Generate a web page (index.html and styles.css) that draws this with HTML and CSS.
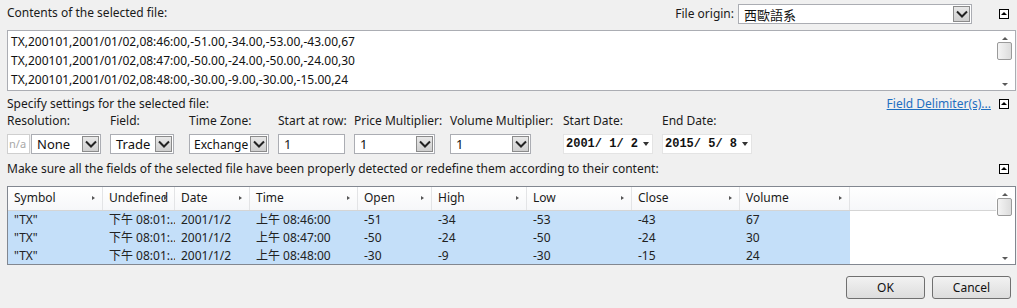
FILE: index.html
```html
<!DOCTYPE html>
<html lang="en">
  <head>
    <title>Import File</title>
    <meta charset="UTF-8" />
    <link rel="stylesheet" href="styles.css">
  </head>
  <body>
    <div class="dialog">
      <!-- file contents -->
      <div class="top-row">
        <span class="caption">Contents of the selected file:</span>
        <div class="origin">
          <span class="caption">File origin:</span>
          <div class="select origin-select">
            <span class="select-text">西歐語系</span>
            <span class="drop"><svg width="12" height="8" viewBox="0 0 12 8"><path d="M1 1.5 L6 6.5 L11 1.5" fill="none" stroke="#222" stroke-width="2"/></svg></span>
          </div>
          <span class="collapse"></span>
        </div>
      </div>

      <div class="contents">
        <div class="contents-lines">
          <div>TX,200101,2001/01/02,08:46:00,-51.00,-34.00,-53.00,-43.00,67</div>
          <div>TX,200101,2001/01/02,08:47:00,-50.00,-24.00,-50.00,-24.00,30</div>
          <div>TX,200101,2001/01/02,08:48:00,-30.00,-9.00,-30.00,-15.00,24</div>
        </div>
        <div class="vscroll">
          <span class="arrow up"></span>
          <span class="thumb"></span>
          <span class="arrow down"></span>
        </div>
      </div>

      <!-- settings -->
      <div class="section-row">
        <span class="caption">Specify settings for the selected file:</span>
        <div class="section-right">
          <a class="link" href="#">Field Delimiter(s)...</a>
          <span class="collapse"></span>
        </div>
      </div>

      <div class="settings">
        <div class="field w-res">
          <span class="caption">Resolution:</span>
          <div class="pair">
            <div class="na">n/a</div>
            <div class="select w-none">
              <span class="select-text">None</span>
              <span class="drop"><svg width="12" height="8" viewBox="0 0 12 8"><path d="M1 1.5 L6 6.5 L11 1.5" fill="none" stroke="#222" stroke-width="2"/></svg></span>
            </div>
          </div>
        </div>
        <div class="field w-field">
          <span class="caption">Field:</span>
          <div class="select w-trade">
            <span class="select-text">Trade</span>
            <span class="drop"><svg width="12" height="8" viewBox="0 0 12 8"><path d="M1 1.5 L6 6.5 L11 1.5" fill="none" stroke="#222" stroke-width="2"/></svg></span>
          </div>
        </div>
        <div class="field w-tz">
          <span class="caption">Time Zone:</span>
          <div class="select w-exch">
            <span class="select-text narrow">Exchange</span>
            <span class="drop"><svg width="12" height="8" viewBox="0 0 12 8"><path d="M1 1.5 L6 6.5 L11 1.5" fill="none" stroke="#222" stroke-width="2"/></svg></span>
          </div>
        </div>
        <div class="field w-row">
          <span class="caption">Start at row:</span>
          <div class="input w-rowbox">1</div>
        </div>
        <div class="field w-price">
          <span class="caption">Price Multiplier:</span>
          <div class="select w-mult">
            <span class="select-text">1</span>
            <span class="drop"><svg width="12" height="8" viewBox="0 0 12 8"><path d="M1 1.5 L6 6.5 L11 1.5" fill="none" stroke="#222" stroke-width="2"/></svg></span>
          </div>
        </div>
        <div class="field w-vol">
          <span class="caption">Volume Multiplier:</span>
          <div class="select w-mult">
            <span class="select-text">1</span>
            <span class="drop"><svg width="12" height="8" viewBox="0 0 12 8"><path d="M1 1.5 L6 6.5 L11 1.5" fill="none" stroke="#222" stroke-width="2"/></svg></span>
          </div>
        </div>
        <div class="field w-start">
          <span class="caption">Start Date:</span>
          <div class="date">2001/ 1/ 2<span class="tri"></span></div>
        </div>
        <div class="field">
          <span class="caption">End Date:</span>
          <div class="date">2015/ 5/ 8<span class="tri"></span></div>
        </div>
      </div>

      <div class="section-row">
        <span class="caption">Make sure all the fields of the selected file have been properly detected or redefine them according to their content:</span>
        <div class="section-right">
          <span class="collapse"></span>
        </div>
      </div>

      <!-- fields grid -->
      <div class="grid">
        <div class="grid-body">
          <div class="grid-head">
            <div class="col c1">Symbol<span class="mark"></span></div>
            <div class="col c2">Undefined<span class="mark"></span></div>
            <div class="col c3">Date<span class="mark"></span></div>
            <div class="col c4">Time<span class="mark"></span></div>
            <div class="col c5">Open<span class="mark"></span></div>
            <div class="col c6">High<span class="mark"></span></div>
            <div class="col c7">Low<span class="mark"></span></div>
            <div class="col c8">Close<span class="mark"></span></div>
            <div class="col c9">Volume<span class="mark"></span></div>
            <div class="col c-rest"></div>
          </div>
          <div class="grid-row">
            <div class="cell c1">"TX"</div><div class="cell c2">下午 08:01:...</div><div class="cell c3">2001/1/2</div><div class="cell c4">上午 08:46:00</div><div class="cell c5">-51</div><div class="cell c6">-34</div><div class="cell c7">-53</div><div class="cell c8">-43</div><div class="cell c9">67</div>
          </div>
          <div class="grid-row">
            <div class="cell c1">"TX"</div><div class="cell c2">下午 08:01:...</div><div class="cell c3">2001/1/2</div><div class="cell c4">上午 08:47:00</div><div class="cell c5">-50</div><div class="cell c6">-24</div><div class="cell c7">-50</div><div class="cell c8">-24</div><div class="cell c9">30</div>
          </div>
          <div class="grid-row">
            <div class="cell c1">"TX"</div><div class="cell c2">下午 08:01:...</div><div class="cell c3">2001/1/2</div><div class="cell c4">上午 08:48:00</div><div class="cell c5">-30</div><div class="cell c6">-9</div><div class="cell c7">-30</div><div class="cell c8">-15</div><div class="cell c9">24</div>
          </div>
        </div>
        <div class="vscroll">
          <span class="arrow up"></span>
          <span class="thumb"></span>
          <span class="arrow down"></span>
        </div>
      </div>

      <div class="buttons">
        <button type="button">OK</button>
        <button type="button">Cancel</button>
      </div>
    </div>
  </body>
</html>
```

FILE: styles.css
```css
body {
  margin: 0;
  background-color: #f0f0f0;
  font-family: "Noto Sans", "Noto Sans CJK TC", sans-serif;
  font-size: 12px;
  color: #1a1a1a;
}
.dialog {
  width: 1017px;
  height: 308px;
  padding: 0 1px 0 7px;
  box-sizing: border-box;
  overflow: hidden;
}
.caption {
  white-space: nowrap;
  line-height: 16px;
}
.top-row {
  display: flex;
  justify-content: space-between;
  align-items: flex-start;
  height: 30px;
  padding-top: 5px;
  box-sizing: border-box;
}
.origin {
  display: flex;
  align-items: center;
  margin-top: -1px;
}
.origin .caption {
  margin-right: 4px;
}
.collapse {
  position: relative;
  display: inline-block;
  width: 8px;
  height: 8px;
  border: 1px solid #000;
  background: #fff;
  margin-left: 27px;
  margin-right: 7px;
}
.collapse::after {
  content: "";
  position: absolute;
  left: 1px;
  top: 2px;
  border-left: 3px solid transparent;
  border-right: 3px solid transparent;
  border-bottom: 3px solid #000;
}

/* combo boxes */
.select {
  display: flex;
  align-items: center;
  height: 20px;
  box-sizing: border-box;
  border: 1px solid #abadb3;
  background: #fff;
  padding: 1px;
}
.select-text {
  flex: 1;
  padding-left: 4px;
  font-size: 13px;
  white-space: nowrap;
  overflow: hidden;
  color: #111;
}
.select-text.narrow {
  font-size: 12px;
  padding-left: 3px;
}
.drop {
  display: flex;
  align-items: center;
  justify-content: center;
  width: 17px;
  height: 16px;
  box-sizing: border-box;
  border: 1px solid #8b8b8b;
  background: linear-gradient(#e8e8e8, #cfcfcf);
}
.origin-select {
  width: 234px;
}

/* file contents box */
.contents {
  display: flex;
  height: 61px;
  border: 1px solid #abadb3;
  background: #fff;
  box-sizing: border-box;
}
.contents-lines {
  flex: 1;
  padding: 1px 0 0 3px;
  line-height: 19px;
  font-size: 12px;
  color: #111;
  white-space: nowrap;
}
.vscroll {
  display: flex;
  flex-direction: column;
  align-items: center;
  justify-content: space-between;
  width: 17px;
  margin-right: 2px;
  padding: 6px 0 4px;
  box-sizing: border-box;
}
.vscroll .thumb {
  width: 13px;
  height: 16px;
  border: 1px solid #9a9a9a;
  border-radius: 2px;
  background: linear-gradient(90deg, #f4f4f4, #dcdcdc);
  margin-bottom: auto;
  margin-top: 2px;
}
.arrow {
  width: 0;
  height: 0;
  border-left: 3px solid transparent;
  border-right: 3px solid transparent;
}
.arrow.up {
  border-bottom: 3px solid #5a5a5a;
}
.arrow.down {
  border-top: 3px solid #5a5a5a;
}

/* settings */
.section-row {
  display: flex;
  justify-content: space-between;
  align-items: center;
  height: 22px;
  padding-top: 3px;
  box-sizing: border-box;
}
.section-right {
  display: flex;
  align-items: center;
}
.link {
  color: #1f6fc0;
  text-decoration: underline;
}
.link + .collapse {
  margin-left: 8px;
}
.settings {
  display: flex;
  height: 43px;
}
.field {
  display: flex;
  flex-direction: column;
  gap: 5px;
}
.w-res { width: 103px; }
.w-field { width: 79px; }
.w-tz { width: 89px; }
.w-row { width: 76px; }
.w-price { width: 96px; }
.w-vol { width: 113px; }
.w-start { width: 99px; }
.pair {
  display: flex;
  gap: 1px;
}
.na {
  width: 23px;
  height: 20px;
  box-sizing: border-box;
  border: 1px solid #cfcfcf;
  background: #fff;
  color: #a8a8a8;
  font-size: 11px;
  line-height: 18px;
  padding-left: 1px;
  overflow: hidden;
}
.w-none { width: 70px; }
.w-trade { width: 64px; }
.w-exch { width: 80px; }
.w-mult { width: 81px; }
.input {
  height: 20px;
  box-sizing: border-box;
  border: 1px solid #abadb3;
  background: #fff;
  padding-left: 5px;
  font-size: 13px;
  line-height: 18px;
}
.w-rowbox { width: 67px; }
.date {
  display: flex;
  align-items: center;
  width: 90px;
  height: 20px;
  box-sizing: border-box;
  border: 1px solid #e4e4e4;
  background: #fff;
  padding-left: 2px;
  font-family: "Liberation Mono", monospace;
  font-weight: bold;
  font-size: 12px;
  white-space: pre;
  color: #111;
}
.tri {
  margin-left: 5px;
  border-left: 3px solid transparent;
  border-right: 3px solid transparent;
  border-top: 4px solid #333;
}

/* fields grid */
.grid {
  display: flex;
  height: 79px;
  margin-top: 8px;
  border: 1px solid #828790;
  background: #fff;
  box-sizing: border-box;
  overflow: hidden;
}
.grid-body {
  flex: 1;
  overflow: hidden;
}
.grid-head {
  display: flex;
  height: 23px;
  border-bottom: 1px solid #d5d5d5;
  background: linear-gradient(#fff, #f6f7f9);
}
.col {
  position: relative;
  box-sizing: border-box;
  padding-left: 6px;
  line-height: 22px;
  border-right: 1px solid #e3e4e6;
  white-space: nowrap;
}
.mark {
  position: absolute;
  right: 7px;
  top: 9px;
  border-top: 2.5px solid transparent;
  border-bottom: 2.5px solid transparent;
  border-left: 3px solid #555;
}
.c-rest {
  flex: 1;
  border-right: none;
}
.grid-row {
  display: flex;
  height: 18px;
}
.cell {
  box-sizing: border-box;
  padding-left: 6px;
  line-height: 18px;
  background: #c4dff9;
  white-space: nowrap;
  color: #222;
}
.c1 { width: 95px; }
.c2 { width: 72px; }
.c3 { width: 75px; }
.c4 { width: 108px; }
.c5 { width: 74px; }
.c6 { width: 95px; }
.c7 { width: 105px; }
.c8 { width: 108px; }
.c9 { width: 110px; }

/* dialog buttons */
.buttons {
  display: flex;
  justify-content: flex-end;
  gap: 7px;
  margin-top: 11px;
  padding-right: 5px;
}
button {
  width: 79px;
  height: 23px;
  border: 1px solid #707070;
  border-radius: 3px;
  background: linear-gradient(#f2f2f2, #dddddd);
  font-family: "Noto Sans", sans-serif;
  font-size: 12px;
  color: #111;
}
```
